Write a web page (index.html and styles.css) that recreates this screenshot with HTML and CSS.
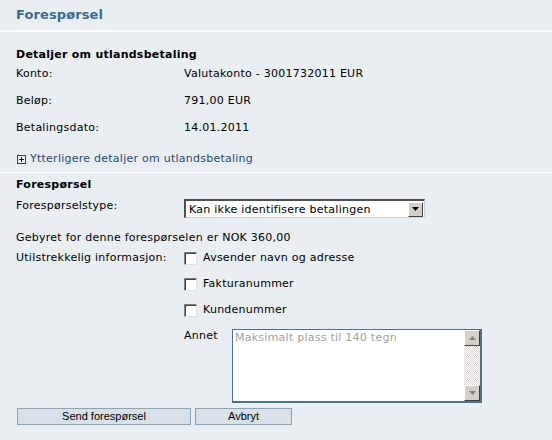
FILE: index.html
```html
<!DOCTYPE html>
<html lang="no">
<head>
<meta charset="utf-8">
<title>Forespørsel</title>
<link rel="stylesheet" href="styles.css">
</head>
<body>
<div class="page">
  <header class="topbar"><h1 class="title">Forespørsel</h1></header>

  <section class="details">
    <h2 class="heading">Detaljer om utlandsbetaling</h2>
    <div class="info-grid">
      <span class="label">Konto:</span><span class="value">Valutakonto - 3001732011 EUR</span>
      <span class="label">Beløp:</span><span class="value">791,00 EUR</span>
      <span class="label">Betalingsdato:</span><span class="value">14.01.2011</span>
    </div>
    <a class="more-link" href="#"><span class="plus-box"><svg width="9" height="9" viewBox="0 0 9 9"><rect x="0.5" y="0.5" width="8" height="8" fill="none" stroke="#404040"/><path d="M2 4.5h5M4.5 2v5" stroke="#202020" stroke-width="1"/></svg></span>Ytterligere detaljer om utlandsbetaling</a>
  </section>

  <section class="request">
    <h2 class="heading">Forespørsel</h2>
    <div class="type-row">
      <span class="label">Forespørselstype:</span>
      <div class="select">
        <span class="select-text">Kan ikke identifisere betalingen</span>
        <span class="select-btn"><svg width="7" height="4" viewBox="0 0 7 4"><path d="M0 0h7L3.5 4z" fill="#000"/></svg></span>
      </div>
    </div>
    <p class="fee">Gebyret for denne forespørselen er NOK 360,00</p>
    <div class="info-row">
      <span class="label">Utilstrekkelig informasjon:</span>
      <div class="checks">
        <label class="check"><span class="box"></span>Avsender navn og adresse</label>
        <label class="check"><span class="box"></span>Fakturanummer</label>
        <label class="check"><span class="box"></span>Kundenummer</label>
        <div class="other">
          <span class="other-label">Annet</span>
          <div class="textarea">
            <span class="placeholder">Maksimalt plass til 140 tegn</span>
            <div class="scrollbar">
              <span class="sb-btn"><svg width="7" height="4" viewBox="0 0 7 4"><path d="M3.5 0L7 4H0z" fill="#808080"/></svg></span>
              <span class="sb-track"></span>
              <span class="sb-btn"><svg width="7" height="4" viewBox="0 0 7 4"><path d="M0 0h7L3.5 4z" fill="#808080"/></svg></span>
            </div>
          </div>
        </div>
      </div>
    </div>
    <div class="actions">
      <button class="btn btn-send" type="button">Send forespørsel</button>
      <button class="btn btn-cancel" type="button">Avbryt</button>
    </div>
  </section>
</div>
</body>
</html>
```

FILE: styles.css
```css
* { box-sizing: border-box; }
html, body { margin: 0; padding: 0; }
body {
  background: #e9eef2;
  font-family: "DejaVu Sans", Verdana, sans-serif;
  font-size: 11px;
  letter-spacing: 0.25px;
  color: #000;
  width: 552px;
  height: 440px;
  overflow: hidden;
}
.topbar {
  height: 32px;
  border-bottom: 2px solid #ffffff;
  padding-left: 16px;
}
.title {
  margin: 0;
  font-size: 13px;
  font-weight: bold;
  letter-spacing: 0.1px;
  line-height: 29px;
  color: #3d6b8d;
}
.details { padding: 15px 0 0 16px; }
.heading {
  margin: 0;
  font-size: 11px;
  font-weight: bold;
  line-height: 16px;
}
.info-grid {
  display: grid;
  grid-template-columns: 168px 1fr;
  row-gap: 11px;
  margin-top: 3px;
  line-height: 16px;
}
.label { line-height: 16px; }
.more-link {
  display: flex;
  align-items: center;
  gap: 4px;
  margin-top: 15px;
  padding-left: 1px;
  line-height: 16px;
  color: #1d4a78;
  text-decoration: none;
}
.plus-box { display: flex; }
.request {
  margin-top: 5px;
  border-top: 1px solid #ffffff;
  padding: 4px 0 0 16px;
}
.type-row {
  display: grid;
  grid-template-columns: 168px 241px;
  margin-top: 5px;
  align-items: start;
}
.select {
  display: flex;
  align-items: center;
  height: 19px;
  margin-top: 1px;
  background: #fff;
  border-top: 2px solid #505050;
  border-left: 2px solid #505050;
  border-right: 1px solid #d4d0c8;
  border-bottom: 1px solid #d4d0c8;
}
.select-text {
  flex: 1;
  padding-left: 3px;
  line-height: 15px;
}
.select-btn {
  width: 15px;
  height: 15px;
  margin-right: 1px;
  display: flex;
  align-items: center;
  justify-content: center;
  background: #d4d0c8;
  border-top: 1px solid #fff;
  border-left: 1px solid #fff;
  border-right: 1px solid #404040;
  border-bottom: 1px solid #404040;
}
.fee {
  margin: 12px 0 0;
  line-height: 16px;
}
.info-row {
  display: grid;
  grid-template-columns: 168px 1fr;
  margin-top: 4px;
}
.checks {
  display: flex;
  flex-direction: column;
  gap: 10px;
}
.check {
  display: flex;
  align-items: center;
  gap: 6px;
  line-height: 16px;
}
.box {
  width: 13px;
  height: 13px;
  background: #fff;
  border-top: 1px solid #808080;
  border-left: 1px solid #808080;
  border-right: 1px solid #e0e0e0;
  border-bottom: 1px solid #e0e0e0;
  box-shadow: inset 1px 1px 0 #404040;
}
.other {
  display: flex;
  align-items: flex-start;
}
.other-label {
  width: 48px;
  line-height: 16px;
}
.textarea {
  display: flex;
  width: 250px;
  height: 74px;
  margin-top: 1px;
  background: #fff;
  border: 2px solid #4d7189;
  border-width: 1px 2px 2px 1px;
}
.placeholder {
  flex: 1;
  color: #a0a0a0;
  padding: 1px 2px;
  line-height: 14px;
}
.scrollbar {
  width: 16px;
  display: flex;
  flex-direction: column;
}
.sb-btn {
  height: 16px;
  display: flex;
  align-items: center;
  justify-content: center;
  background: #d4d0c8;
  border-top: 1px solid #fff;
  border-left: 1px solid #fff;
  border-right: 1px solid #404040;
  border-bottom: 1px solid #404040;
}
.sb-track {
  flex: 1;
  background: repeating-conic-gradient(#ffffff 0 25%, #d4d0c8 0 50%) 0 0 / 2px 2px;
}
.actions {
  display: flex;
  gap: 4px;
  margin-top: 5px;
  padding-left: 1px;
}
.btn {
  height: 17px;
  padding: 0;
  background: #d9e1e8;
  border: 1px solid #8aa3b6;
  font-family: "Liberation Sans", Arial, sans-serif;
  font-size: 11px;
  letter-spacing: 0;
  color: #000;
  line-height: 15px;
}
.btn-send { width: 174px; }
.btn-cancel { width: 97px; }
```
